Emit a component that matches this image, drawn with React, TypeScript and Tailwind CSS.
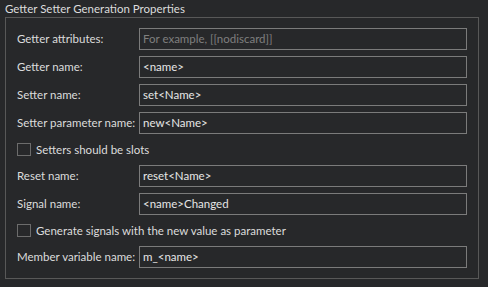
const font = { fontFamily: 'Lato, "Noto Sans", sans-serif' }

type Field = { label: string; value?: string; placeholder?: string }

const FieldRow = ({ label, value, placeholder }: Field) => (
  <div className="flex items-center h-[22px]">
    <span className="w-[122px] shrink-0 whitespace-nowrap text-[11.5px] text-[#dcdcdc]">{label}</span>
    <div className="flex-1 h-[22px] border border-[#7b7b7b] flex items-center px-[3px] text-[11.5px] whitespace-nowrap">
      {value ? (
        <span className="text-[#e6e6e6]">{value}</span>
      ) : (
        <span className="text-[#7f7f7f]">{placeholder}</span>
      )}
    </div>
  </div>
)

const CheckRow = ({ label }: { label: string }) => (
  <div className="flex items-center h-[19px] gap-[5px]">
    <div className="w-[14px] h-[13px] border border-[#6c6c6c] bg-[#27282a]" />
    <span className="text-[11.5px] text-[#dcdcdc] whitespace-nowrap">{label}</span>
  </div>
)

export default function App() {
  return (
    <div className="w-[488px] h-[287px] bg-[#27282a] overflow-hidden" style={font}>
      <div className="h-[17px] pl-[5px] text-[11.5px] leading-[17px] text-[#dcdcdc] whitespace-nowrap">
        Getter Setter Generation Properties
      </div>
      <div className="ml-[5px] w-[474px] h-[262px] border border-[#585858] pt-[10px] pl-[11px] pr-[11px] flex flex-col gap-[6px]">
        <FieldRow label="Getter attributes:" placeholder="For example, [[nodiscard]]" />
        <FieldRow label="Getter name:" value="<name>" />
        <FieldRow label="Setter name:" value="set<Name>" />
        <FieldRow label="Setter parameter name:" value="new<Name>" />
        <CheckRow label="Setters should be slots" />
        <FieldRow label="Reset name:" value="reset<Name>" />
        <FieldRow label="Signal name:" value="<name>Changed" />
        <CheckRow label="Generate signals with the new value as parameter" />
        <FieldRow label="Member variable name:" value="m_<name>" />
      </div>
    </div>
  )
}
